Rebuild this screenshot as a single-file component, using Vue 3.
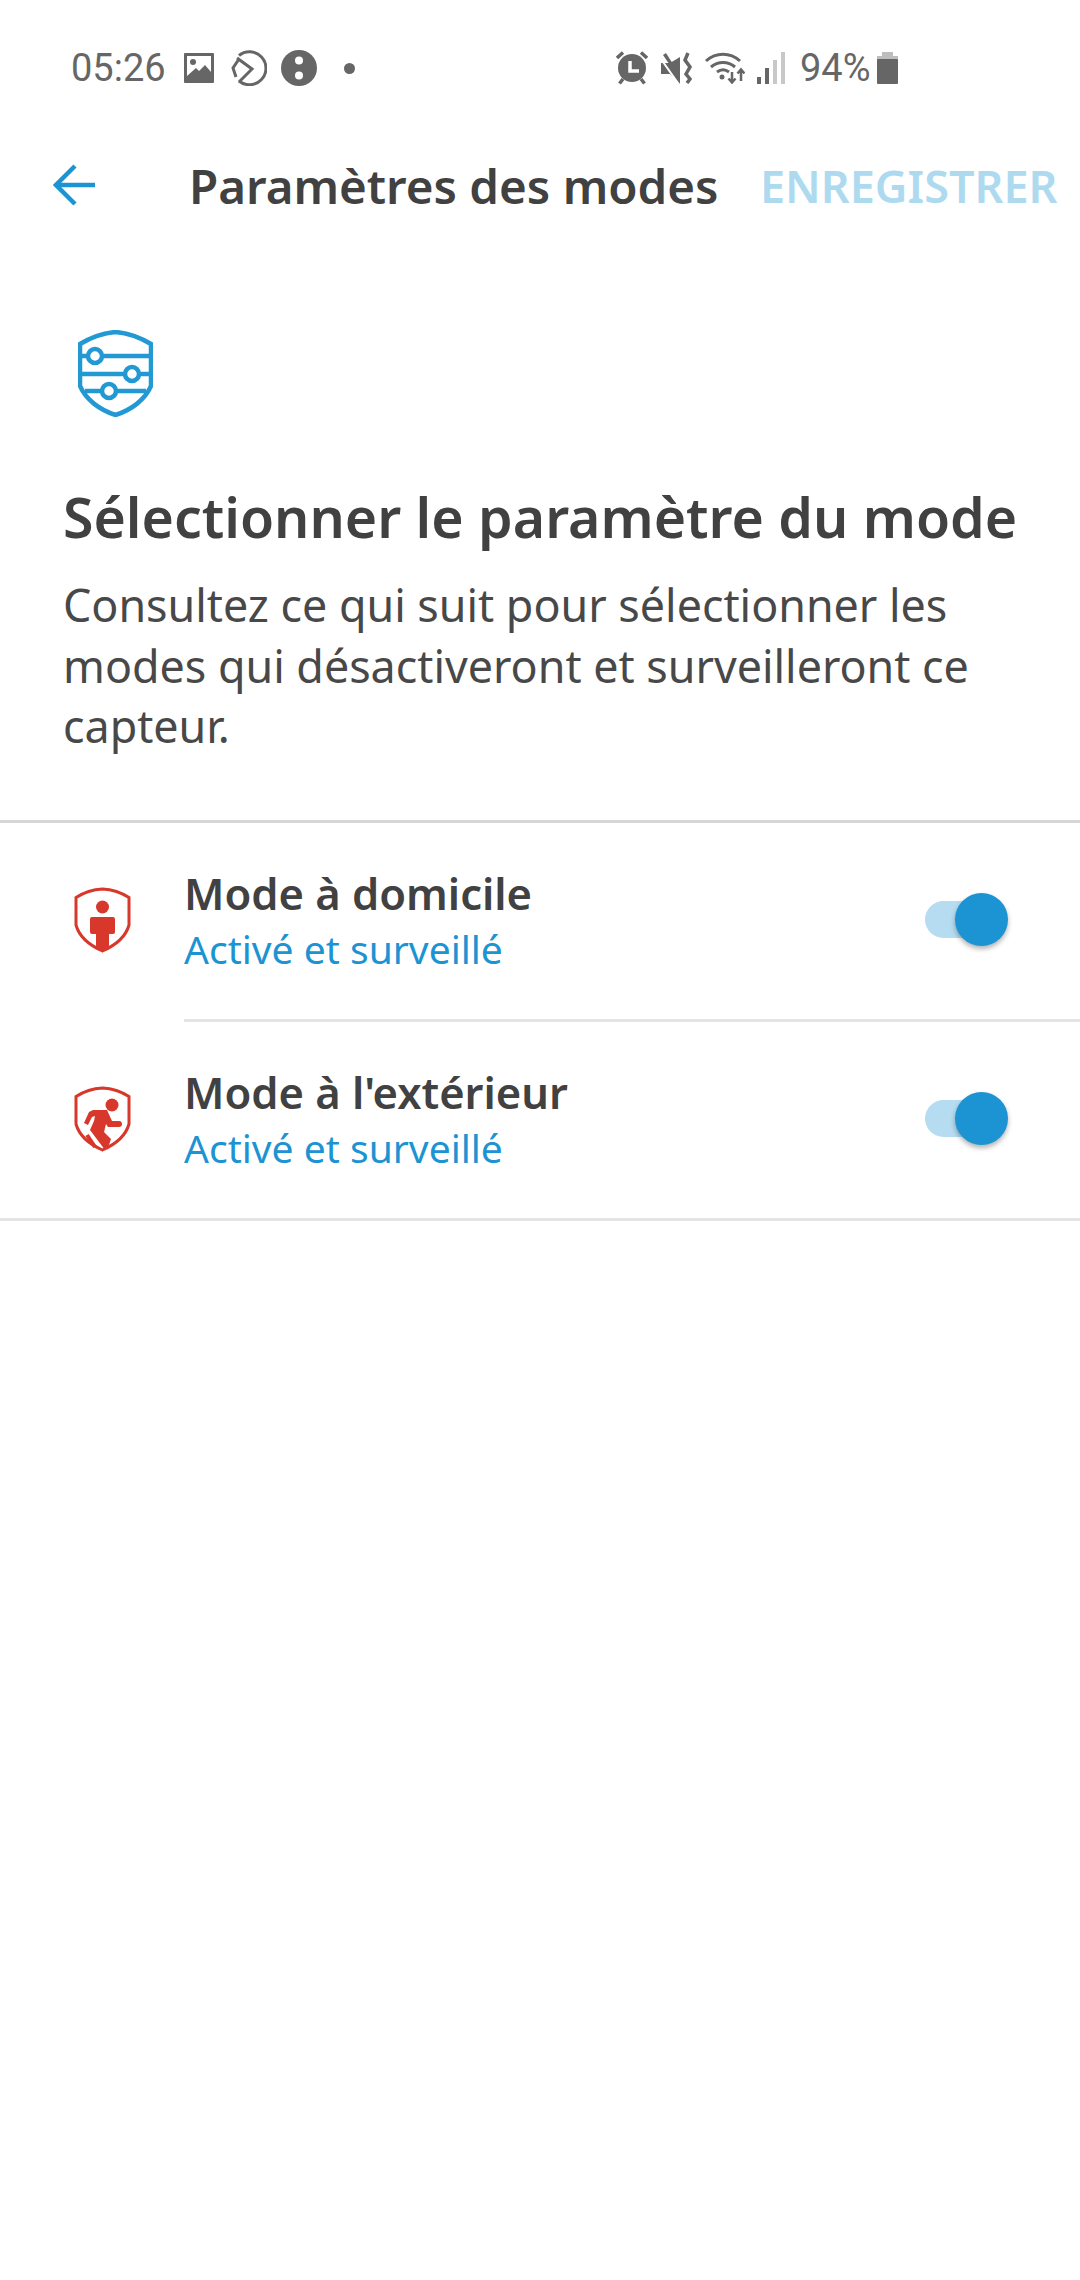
<template>
  <div class="screen">
    <div class="status-bar">
      <div class="status-left">
        <span class="clock">05:26</span>
        <svg class="ic-image" viewBox="0 0 30 30">
          <path fill="#666" d="M1 0h28a1 1 0 0 1 1 1v28a1 1 0 0 1-1 1H1a1 1 0 0 1-1-1V1a1 1 0 0 1 1-1z" />
          <path fill="#fff" d="M3 3h24v16l-6-7-6 6-3-3-9 8z" />
          <circle cx="9" cy="9" r="3" fill="#666" />
        </svg>
        <svg class="ic-round" viewBox="0 0 36 36" fill="none" stroke="#666" stroke-width="3">
          <path d="M8 5.500A16.500 16.500 0 1 1 8 31" />
          <path d="M8 9 2 18l3 9" />
          <path d="M6 8 21 19 8 32" />
        </svg>
        <svg class="ic-info" viewBox="0 0 36 36">
          <circle cx="18" cy="18" r="18" fill="#666" />
          <circle cx="18" cy="10.500" r="4" fill="#fff" />
          <circle cx="18" cy="25.500" r="4" fill="#fff" />
        </svg>
        <span class="dot"></span>
      </div>
      <div class="status-right">
        <svg class="ic-alarm" viewBox="0 0 32 34">
          <circle cx="16" cy="17" r="14" fill="#666" />
          <path d="M1 7 7 1.500M31 7l-6-5.500M7 28l-3.500 4.500M25 28l3.500 4.500" stroke="#666" stroke-width="3.500" fill="none" />
          <path d="M14 10v10h9" stroke="#fff" stroke-width="3.500" fill="none" />
        </svg>
        <svg class="ic-mute" viewBox="0 0 31 32">
          <path fill="#666" d="M0 11h9L19 5v27L9 22H0z" />
          <path fill="#666" d="M2 3l3-2 14 22v5z" />
          <path stroke="#fff" stroke-width="2" d="M0 7l19 27" />
          <path stroke="#666" stroke-width="3.500" fill="none" d="M27 1l-3 7 5 7-4 7 4 5-3 4" />
        </svg>
        <svg class="ic-wifi" viewBox="0 0 40 32" fill="none" stroke="#666" stroke-width="3">
          <path d="M1 9c10-9 24-9 34 0" />
          <path d="M6 15c7-6 17-6 24 0" />
          <path d="M12 20c4-3 8-3 12 0" />
          <circle cx="17" cy="25" r="2.500" fill="#666" stroke="none" />
          <path stroke-width="2.500" d="M27 20v10M23.500 26.500l3.500 4 3.500-4" />
          <path stroke-width="2.500" d="M36 29V18M32.500 21.500l3.500-4 3.500 4" />
        </svg>
        <svg class="ic-signal" viewBox="0 0 28 32">
          <rect x="0" y="25" width="4" height="7" fill="#666" />
          <rect x="8" y="16" width="4" height="16" fill="#666" />
          <rect x="16" y="8" width="4" height="24" fill="#c8c8c8" />
          <rect x="24" y="0" width="4" height="32" fill="#c8c8c8" />
        </svg>
        <span class="battery-pct">94%</span>
        <svg class="ic-battery" viewBox="0 0 21 32">
          <rect x="5" y="0" width="11" height="4" fill="#bdbdbd" />
          <rect x="0" y="4" width="21" height="4" fill="#bdbdbd" />
          <rect x="0" y="7" width="21" height="25" rx="1" fill="#666" />
        </svg>
      </div>
    </div>

    <header class="app-bar">
      <svg class="back" viewBox="0 0 42 42" fill="none" stroke="#1c93d2" stroke-width="4.500">
        <path d="M42 21H3" />
        <path d="M22 2 3 21l19 19" />
      </svg>
      <h1 class="app-title">Paramètres des modes</h1>
      <span class="save">ENREGISTRER</span>
    </header>

    <section class="intro">
      <svg class="intro-icon" viewBox="0 0 75 87" fill="none" stroke="#2299d3" stroke-width="4.500">
        <path d="M37.500 2C50 3 63 8 73 14v42c-6 14-20 24-35.500 29C22 80 8 70 2 56V14C12 8 25 3 37.500 2z" />
        <path d="M2 26h8M24 26h49M2 44h45M61 44h12M7 61h17M38 61h30" />
        <circle cx="17" cy="26" r="7" />
        <circle cx="54" cy="44" r="7" />
        <circle cx="31" cy="61" r="7" />
      </svg>
      <h2 class="intro-title">Sélectionner le paramètre du mode</h2>
      <p class="intro-text">
        Consultez ce qui suit pour sélectionner les modes qui désactiveront et surveilleront ce
        capteur.
      </p>
    </section>

    <ul class="modes">
      <li v-for="mode in modes" :key="mode.name" class="mode">
        <svg class="mode-icon" viewBox="0 0 57 66">
          <path
            fill="none"
            stroke="#d8382b"
            stroke-width="3"
            d="M28.500 2C38 2.500 48 6 55 10.500V38c-3 11-13 20-26.500 26C15 58 5 49 2 38V10.500C9 6 19 2.500 28.500 2z"
          />
          <template v-if="mode.icon === 'home'">
            <circle cx="28.500" cy="20" r="6.500" fill="#d8382b" />
            <path
              fill="#d8382b"
              d="M18 30h21a2 2 0 0 1 2 2v13a2 2 0 0 1-2 2h-4v15l-6.500 2-6.500-2V47h-4a2 2 0 0 1-2-2V32a2 2 0 0 1 2-2z"
            />
          </template>
          <template v-else>
            <circle cx="38" cy="19" r="6.500" fill="#d8382b" />
            <path
              fill="#d8382b"
              d="M19 24h14l5 11h7a3 3 0 0 1 0 6H34l-2-3-2 8 7 7-2 6-4 5L16 44l4-9 1-5-3 1-4 8-4-2 5-11z"
            />
            <path fill="none" stroke="#d8382b" stroke-width="4" d="M13 49l8 12" />
          </template>
        </svg>
        <div class="mode-body" :class="{ 'mode-body--line': mode.line }">
          <div class="mode-text">
            <div class="mode-name">{{ mode.name }}</div>
            <div class="mode-state">{{ mode.state }}</div>
          </div>
          <div class="toggle">
            <span class="toggle-track"></span>
            <span class="toggle-thumb"></span>
          </div>
        </div>
      </li>
    </ul>
  </div>
</template>

<script setup>
const modes = [
  { name: 'Mode à domicile', state: 'Activé et surveillé', icon: 'home', line: true },
  { name: "Mode à l'extérieur", state: 'Activé et surveillé', icon: 'away', line: false },
]
</script>

<style>
html,
body {
  margin: 0;
  background: #fff;
}
</style>

<style scoped>
.screen {
  width: 1080px;
  height: 2280px;
  background: #fff;
  color: #414141;
  font-family: 'Noto Sans', Lato, sans-serif;
  overflow: hidden;
}

.status-bar {
  height: 136px;
  box-sizing: border-box;
  padding: 0 182px 0 71px;
  display: flex;
  justify-content: space-between;
  align-items: center;
  color: #666;
  font-family: Roboto, sans-serif;
  font-size: 38px;
}
.status-left,
.status-right {
  display: flex;
  align-items: center;
}
.clock {
  width: 113px;
}
.ic-image {
  width: 30px;
  height: 30px;
  margin-right: 17px;
}
.ic-round {
  width: 36px;
  height: 36px;
  margin-right: 14px;
}
.ic-info {
  width: 36px;
  height: 36px;
  margin-right: 27px;
}
.dot {
  width: 11px;
  height: 11px;
  border-radius: 50%;
  background: #666;
}
.ic-alarm {
  width: 32px;
  height: 34px;
  margin-right: 13px;
}
.ic-mute {
  width: 31px;
  height: 32px;
  margin-right: 13px;
}
.ic-wifi {
  width: 40px;
  height: 32px;
  margin-right: 12px;
}
.ic-signal {
  width: 28px;
  height: 32px;
  margin-right: 15px;
}
.battery-pct {
  width: 77px;
}
.ic-battery {
  width: 21px;
  height: 32px;
}

.app-bar {
  height: 98px;
  display: flex;
  align-items: center;
  padding-left: 53px;
}
.back {
  width: 42px;
  height: 42px;
  margin-right: 94px;
}
.app-title {
  margin: 0 45px 0 0;
  font-size: 47.500px;
  font-weight: 600;
  white-space: nowrap;
  width: 526px;
}
.save {
  font-size: 45px;
  font-weight: 600;
  color: #aedaf0;
  white-space: nowrap;
}

.intro {
  padding: 96px 40px 0 63px;
  height: 589px;
  box-sizing: border-box;
  border-bottom: 3px solid #d6d6d6;
}
.intro-icon {
  display: block;
  width: 75px;
  height: 87px;
  margin-left: 15px;
}
.intro-title {
  margin: 66px 0 0;
  font-size: 55.400px;
  line-height: 68px;
  font-weight: 600;
  white-space: nowrap;
}
.intro-text {
  margin: 24px 0 0;
  font-size: 44.800px;
  line-height: 60.500px;
  width: 980px;
  color: #484848;
}

.modes {
  list-style: none;
  margin: 0;
  padding: 0;
  border-bottom: 3px solid #e4e4e4;
}
.mode {
  display: flex;
  align-items: stretch;
  padding-left: 74px;
}
.mode-icon {
  width: 57px;
  height: 66px;
  flex: none;
  margin: 64px 53px 0 0;
}
.mode-body {
  flex: 1;
  height: 196px;
  box-sizing: border-box;
  display: flex;
  justify-content: space-between;
  align-items: center;
  padding-right: 72px;
}
.mode-body--line {
  height: 199px;
  border-bottom: 3px solid #e4e4e4;
}
.mode-name {
  font-size: 43.500px;
  line-height: 56px;
  font-weight: 600;
  white-space: nowrap;
}
.mode-state {
  font-size: 39px;
  line-height: 56px;
  color: #1c93d2;
  white-space: nowrap;
}
.toggle {
  position: relative;
  width: 83px;
  height: 53px;
  margin-bottom: 3px;
}
.toggle-track {
  position: absolute;
  left: 0;
  top: 8px;
  width: 72px;
  height: 37px;
  border-radius: 19px;
  background: #b5dcf1;
}
.toggle-thumb {
  position: absolute;
  right: 0;
  top: 0;
  width: 53px;
  height: 53px;
  border-radius: 50%;
  background: #1c93d2;
  box-shadow: 0 3px 5px rgba(0, 0, 0, 0.3);
}
</style>
